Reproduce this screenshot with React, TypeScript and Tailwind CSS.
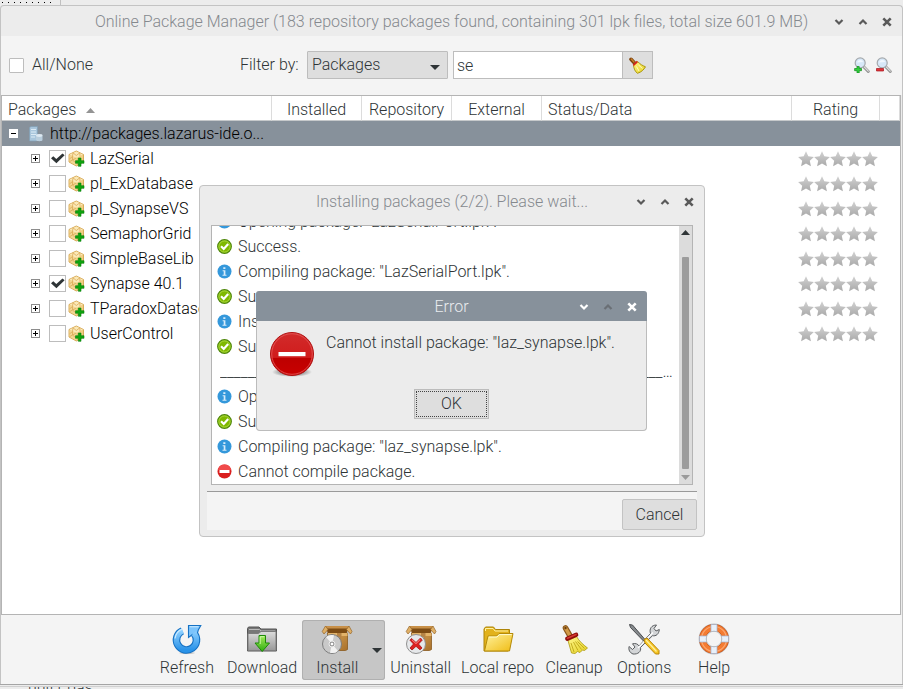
import { useState } from "react";
import type { ReactNode } from "react";

type LogKind = "info" | "ok" | "error";

interface PackageItem {
  name: string;
  checked: boolean;
}

const packages: PackageItem[] = [
  { name: "LazSerial", checked: true },
  { name: "pl_ExDatabase", checked: false },
  { name: "pl_SynapseVS", checked: false },
  { name: "SemaphorGrid", checked: false },
  { name: "SimpleBaseLib", checked: false },
  { name: "Synapse 40.1", checked: true },
  { name: "TParadoxDataset", checked: false },
  { name: "UserControl", checked: false },
];

const log: { kind?: LogKind; text: string }[] = [
  { kind: "info", text: 'Opening package: "LazSerialPort.lpk".' },
  { kind: "ok", text: "Success." },
  { kind: "info", text: 'Compiling package: "LazSerialPort.lpk".' },
  { kind: "ok", text: "Success." },
  { kind: "info", text: 'Installing package: "LazSerialPort.lpk".' },
  { kind: "ok", text: "Success." },
  { text: "_".repeat(90) },
  { kind: "info", text: 'Opening package: "laz_synapse.lpk".' },
  { kind: "ok", text: "Success." },
  { kind: "info", text: 'Compiling package: "laz_synapse.lpk".' },
  { kind: "error", text: "Cannot compile package." },
];

function Gradients() {
  return (
    <svg className="absolute size-0" aria-hidden="true">
      <defs>
        <linearGradient id="star" x1="0" y1="0" x2="0" y2="1">
          <stop offset="0" stopColor="#d2d2d2" />
          <stop offset="1" stopColor="#a9a9a9" />
        </linearGradient>
        <linearGradient id="gold" x1="0" y1="0" x2="1" y2="1">
          <stop offset="0" stopColor="#fff3a0" />
          <stop offset="1" stopColor="#f0bc14" />
        </linearGradient>
        <linearGradient id="straw" x1="0" y1="0" x2="1" y2="1">
          <stop offset="0" stopColor="#fff68a" />
          <stop offset="1" stopColor="#e4d022" />
        </linearGradient>
        <linearGradient id="blue" x1="0" y1="0" x2="0" y2="1">
          <stop offset="0" stopColor="#8fd0ff" />
          <stop offset="1" stopColor="#2a93e8" />
        </linearGradient>
        <linearGradient id="green" x1="0" y1="0" x2="0" y2="1">
          <stop offset="0" stopColor="#a4ea5a" />
          <stop offset="1" stopColor="#2fae10" />
        </linearGradient>
        <linearGradient id="grey" x1="0" y1="0" x2="0" y2="1">
          <stop offset="0" stopColor="#dcdcdc" />
          <stop offset="1" stopColor="#989898" />
        </linearGradient>
        <linearGradient id="carton" x1="0" y1="0" x2="1" y2="1">
          <stop offset="0" stopColor="#dba75a" />
          <stop offset="1" stopColor="#a8702a" />
        </linearGradient>
        <linearGradient id="red" x1="0" y1="0" x2="0" y2="1">
          <stop offset="0" stopColor="#d22b2b" />
          <stop offset="0.58" stopColor="#d01c1c" />
          <stop offset="0.6" stopColor="#bd0000" />
          <stop offset="1" stopColor="#c90000" />
        </linearGradient>
        <radialGradient id="shade">
          <stop offset="0.5" stopColor="#777" stopOpacity="0.8" />
          <stop offset="1" stopColor="#777" stopOpacity="0" />
        </radialGradient>
      </defs>
    </svg>
  );
}

function Chevron({ up, className }: { up?: boolean; className: string }) {
  return (
    <svg viewBox="0 0 10 10" className={`size-[10px] ${className}`} fill="none" stroke="currentColor" strokeWidth="2.2">
      <path d={up ? "M1.5 7 5 3.5 8.5 7" : "M1.5 3 5 6.5 8.5 3"} />
    </svg>
  );
}

function TitleBar({ title, active }: { title: string; active?: boolean }) {
  const tone = active ? "text-white" : "text-[#5a5a5a]";
  return (
    <header
      className={`grid h-[30px] shrink-0 grid-cols-[75px_1fr_75px] items-center pt-0.5 ${
        active ? "rounded-t-[3px] bg-[#87919b] text-[#e9ecef]" : "text-[#85898e]"
      }`}
    >
      <h2 className="col-start-2 text-center whitespace-nowrap">{title}</h2>
      <div className="flex">
        <button aria-label="Minimize" className="flex size-6 items-center justify-center">
          <Chevron className={tone} />
        </button>
        <button aria-label="Maximize" className="flex size-6 items-center justify-center">
          <Chevron up className={active ? "text-[#6a6f75]" : tone} />
        </button>
        <button aria-label="Close" className="flex size-6 items-center justify-center">
          <svg viewBox="0 0 10 10" className={`size-[10px] ${tone}`} stroke="currentColor" strokeWidth="2.6">
            <path d="M1.3 1.3 8.7 8.7M8.7 1.3 1.3 8.7" />
          </svg>
        </button>
      </div>
    </header>
  );
}

function CheckBox({ id, checked, small }: { id: string; checked?: boolean; small?: boolean }) {
  const [on, setOn] = useState(!!checked);
  return (
    <span className="grid shrink-0 place-items-center">
      <input
        id={id}
        type="checkbox"
        checked={on}
        onChange={() => setOn(!on)}
        className={`col-start-1 row-start-1 appearance-none border border-[#bdbdbd] bg-white ${
          small ? "size-[15px] rounded-[1px]" : "size-[17px]"
        }`}
      />
      {on && (
        <svg viewBox="0 0 17 17" className="pointer-events-none col-start-1 row-start-1 size-[17px]">
          <path d="M2 8.300 4.300 6.200 7.300 9 13.500 3.600 15.600 5.300 7.400 13.300Z" fill="#2e3436" />
        </svg>
      )}
    </span>
  );
}

function Expander({ open }: { open?: boolean }) {
  return (
    <button
      aria-label={open ? "Collapse" : "Expand"}
      className={`flex size-[9px] shrink-0 items-center justify-center border bg-white ${
        open ? "border-white" : "border-[#8c8c8c]"
      }`}
    >
      <svg viewBox="0 0 5 5" className="size-[5px]" fill="#000" shapeRendering="crispEdges">
        <path d={open ? "M0 2H5V3H0Z" : "M0 2H2V0H3V2H5V3H3V5H2V3H0Z"} />
      </svg>
    </button>
  );
}

function ServerIcon() {
  return (
    <svg viewBox="0 0 16 16" className="size-4 shrink-0">
      <path d="M1.500 1.500 3 .5H9.500V14L8 15H1.500Z" fill="#a9c6dc" stroke="#7f9db5" strokeWidth=".7" />
      <path d="M3 3.500H8M3 6H8M3 8.500H8M3 11H7" stroke="#dcebf5" strokeWidth="1.1" />
      <path d="M8 9.500V14C8 15.600 14.500 15.600 14.500 14V9.500" fill="#b9cedd" />
      <ellipse cx="11.250" cy="9.500" rx="3.250" ry="1.400" fill="#dde9f2" />
    </svg>
  );
}

function PackageIcon() {
  return (
    <svg viewBox="0 0 17 17" className="size-[17px] shrink-0">
      <path d="M1 4.500 8.300 1 15.500 4.500V12L8.300 16 1 12Z" fill="#f0cf82" stroke="#cf9a3d" strokeWidth=".8" />
      <path d="M1.500 4.600 8.300 1.500 15 4.600 8.300 8Z" fill="#fbe9b8" />
      <path d="M1.500 5V11.700L8.300 15.500V8Z" fill="#f3d795" />
      <path d="M4.500 6.500 5 2.800 8.300 5.500 11.800 2.800 12 6.200M1.400 9 4.500 6.500V10L1.500 11.700M8.300 8 4.500 10 8 13" fill="none" stroke="#dba955" strokeWidth=".8" />
      <path d="M10.300 8H13V10.700H16V13.300H13V16.300H10.300V13.300H7.500V10.700H10.300Z" fill="#0fa40f" stroke="#08800c" strokeWidth=".6" />
    </svg>
  );
}

function Stars() {
  return (
    <div className="flex justify-center pl-[3px]" role="img" aria-label="Not rated">
      {[0, 1, 2, 3, 4].map((n) => (
        <svg key={n} viewBox="0 0 16 16" className="size-4" fill="url(#star)">
          <path d="M8 .3 10.300 5.300 15.900 6 11.800 9.700 12.900 15.200 8 12.500 3.100 15.200 4.200 9.700.1 6 5.700 5.300Z" />
        </svg>
      ))}
    </div>
  );
}

function LogIcon({ kind }: { kind: LogKind }) {
  if (kind === "info") {
    return (
      <svg viewBox="0 0 15 15" className="size-[15px] shrink-0">
        <circle cx="7.500" cy="7.500" r="7" fill="#3498db" />
        <path d="M6.300 3.300H8.400V5H6.300ZM5.600 6.300H8.400V10.700H9.500V11.700H5.500V10.700H6.700V7.200H5.600Z" fill="#d8ecfa" />
      </svg>
    );
  }
  if (kind === "ok") {
    return (
      <svg viewBox="0 0 15 15" className="size-[15px] shrink-0">
        <circle cx="7.500" cy="7.500" r="6.800" fill="#7fb800" stroke="#4d8508" strokeWidth="1.200" />
        <circle cx="7.500" cy="7.500" r="5.600" fill="none" stroke="#b6e24e" strokeWidth=".8" />
        <path d="M4 7.300 6.700 9.900 11.200 5" fill="none" stroke="#fff" strokeWidth="2.200" />
      </svg>
    );
  }
  return (
    <svg viewBox="0 0 15 15" className="size-[15px] shrink-0">
      <circle cx="7.500" cy="7.500" r="7" fill="#d91f1f" />
      <path d="M1 6A6.600 6.600 0 0 1 14 6Z" fill="#f04a4a" />
      <path d="M2.500 6H12.500V9H2.500Z" fill="#fff" />
    </svg>
  );
}

function BigErrorIcon() {
  return (
    <svg viewBox="0 0 46 46" className="size-[46px] shrink-0">
      <ellipse cx="23" cy="41" rx="20" ry="5" fill="url(#shade)" />
      <circle cx="23" cy="23" r="21.500" fill="url(#red)" stroke="#b01010" />
      <circle cx="23" cy="23" r="20.300" fill="none" stroke="#e65a5a" strokeWidth=".8" />
      <path d="M9.500 21H36.500V25.200H9.500Z" fill="#fff" />
    </svg>
  );
}

function Magnifier({ plus }: { plus?: boolean }) {
  return (
    <svg viewBox="0 0 16 16" className="size-4">
      <path d="M9.500 9.500 14.300 14.500" stroke="#8d8d8d" strokeWidth="2.800" strokeLinecap="round" />
      <path d="M9.800 9.500 14.300 14.100" stroke="#dedede" strokeWidth="1.200" strokeLinecap="round" />
      <circle cx="6.200" cy="5.900" r="5" fill="#d7e8f8" stroke="#a5a9ad" strokeWidth="1.200" />
      <path d="M3 5.500A3.300 3.300 0 0 1 9.300 5Z" fill="#f2f8fe" />
      {plus ? (
        <path d="M3 9.500H5.200V11.500H7.500V13.700H5.200V16H3V13.700H.6V11.500H3Z" fill="#2fd03a" stroke="#118a1c" strokeWidth=".7" />
      ) : (
        <path d="M.5 11.500H7.500V14H.5Z" fill="#e0343a" stroke="#a8141c" strokeWidth=".7" />
      )}
    </svg>
  );
}

function SmallBroom() {
  return (
    <svg viewBox="0 0 17 17" className="size-[17px]">
      <path d="M2 2.300 5.500 6" stroke="#7c420e" strokeWidth="3.600" strokeLinecap="round" />
      <path d="M2.300 2 5 5" stroke="#c9802c" strokeWidth="1.300" strokeLinecap="round" />
      <path d="M4.500 8.500 8.700 4.500C11 7.300 13.500 8.500 16.500 9.800 14.500 13 12.500 15 8.500 16.300 5.800 14.500 5 11.500 4.500 8.500Z" fill="url(#straw)" stroke="#a58f00" strokeWidth=".9" />
      <path d="M4.300 8.300 8.300 4.500" stroke="#d8261a" strokeWidth="1.800" />
      <path d="M7.500 9.500 10 14M9.500 8 13.500 11.500" stroke="#fffbc0" />
    </svg>
  );
}

function RefreshIcon() {
  return (
    <svg viewBox="0 0 32 32" className="size-8">
      <ellipse cx="16" cy="30" rx="9" ry="1.600" fill="url(#shade)" opacity=".5" />
      <path d="M11.300 7.900A10 10 0 1 0 23.200 10.600" fill="none" stroke="#1672c4" strokeWidth="7.600" />
      <path d="M17.500 2.500H29.800L27.300 7 25.500 13.500 21.500 11.500 17.500 14.500Z" fill="#7cc4fc" stroke="#1672c4" strokeWidth="1.100" />
      <path d="M11.800 7.700A10 10 0 1 0 22.800 10.200" fill="none" stroke="url(#blue)" strokeWidth="5.400" />
      <path d="M11.500 6A11.800 11.800 0 0 0 4 15.500M18.700 3.700H27.500" fill="none" stroke="#cdebff" strokeWidth="1.100" />
    </svg>
  );
}

function DownloadIcon() {
  return (
    <svg viewBox="0 0 32 32" className="size-8">
      <path d="M1.500 28V5.500L2.500 4H13L15 6H30.500V28Z" fill="#777" stroke="#555" />
      <path d="M3 6.500H13.500L15 8H29" stroke="#bbb" fill="none" />
      <path d="M2 10.500H12.500L15 8.500H30V27.500H2Z" fill="url(#grey)" stroke="#7c7c7c" />
      <path d="M13 12.500H19.500V20H23.500L16.200 28.500 9 20H13Z" fill="url(#green)" stroke="#1c8a08" />
      <path d="M14.200 13.700H18.300M14.200 14V21" stroke="#d4ffb0" strokeWidth=".9" />
    </svg>
  );
}

function Carton({ children }: { children: ReactNode }) {
  return (
    <svg viewBox="0 0 32 32" className="size-8">
      <path d="M6.500 10H26.500V26.500L24.500 27.500H8Z" fill="url(#carton)" stroke="#8a5a1e" strokeWidth=".8" />
      <path d="M4.500 3.500H28L25.500 10.500H7Z" fill="#7d4c14" />
      <path d="M4.500 3H28L27 5.500H5.500Z" fill="#c89048" />
      <path d="M4.500 3 1.200 8.500 3 11 7 6.500ZM28 3 31 8.500 29.500 11 25.500 6.500Z" fill="#e0b066" stroke="#94642a" strokeWidth=".7" />
      <path d="M7 10H26.500V13H7Z" fill="#e2b36a" />
      <path d="M16 10H20.500V17H16Z" fill="#b68446" />
      {children}
    </svg>
  );
}

function InstallIcon() {
  return (
    <Carton>
      <circle cx="11" cy="21" r="9.500" fill="#c9c9c9" stroke="#7d7d7d" />
      <path d="M11 21 5 14A9 9 0 0 1 13 12.200ZM11 21 17 27.900A9 9 0 0 1 9 29.800Z" fill="#f2f2f2" />
      <circle cx="11" cy="21" r="3" fill="#999" stroke="#eee" />
      <circle cx="11" cy="21" r="1.300" fill="#fff" />
    </Carton>
  );
}

function UninstallIcon() {
  return (
    <Carton>
      <circle cx="11" cy="21" r="9.500" fill="#e6e8ea" stroke="#8f8f8f" />
      <path d="M6.500 15.500 11 19.500 15.500 15 17.200 17.200 13.500 21 17 25 15 26.800 11 23.300 7 27 5 25 8.500 21 5 17.200Z" fill="#dd2222" stroke="#a80f0f" strokeWidth=".8" />
      <path d="M7 16.800 11 20.600 15.300 16.400" fill="none" stroke="#ff8d8d" />
    </Carton>
  );
}

function FolderIcon() {
  return (
    <svg viewBox="0 0 32 32" className="size-8">
      <path d="M2 28V6L3.500 4H11.500L13.500 6.500H27.500V12L26 28Z" fill="#e2b21c" stroke="#ad8408" />
      <path d="M3.500 8V5.500H11L13 8H26" stroke="#fff0a0" fill="none" />
      <path d="M2.500 28 6 13H14.500L17 10.500H31L27.500 28Z" fill="url(#gold)" stroke="#b58a08" />
      <path d="M6.800 14H15L17.400 11.600H29.800" stroke="#fffbd0" fill="none" />
    </svg>
  );
}

function BroomIcon() {
  return (
    <svg viewBox="0 0 32 32" className="size-8">
      <path d="M7.500 5 11.500 12" stroke="#8e5a1c" strokeWidth="5.600" strokeLinecap="round" />
      <path d="M7.500 5 11.500 12" stroke="#d29a48" strokeWidth="3.400" strokeLinecap="round" />
      <circle cx="7.500" cy="5" r="1.200" fill="#6b3e0c" />
      <path d="M10 17.500 18.500 13.500C21 18 25 21.500 29.500 25L26.500 27.500 24.500 27 22 29.500 19.500 28.500 17 30.500 13.500 30Z" fill="url(#straw)" stroke="#ab980c" strokeWidth=".8" />
      <path d="M13 20 16 29M15.500 19 20 27.500M17.500 18.500 23.500 26.500M19.500 18.500 26.500 25.500" stroke="#b8a012" strokeWidth=".8" />
      <path d="M9.200 15.700 18.200 11.800" stroke="#8f0c0c" strokeWidth="4.200" strokeLinecap="round" />
      <path d="M9.400 15.200 18 11.400" stroke="#d33a30" strokeWidth="1.600" strokeLinecap="round" />
    </svg>
  );
}

function ToolsIcon() {
  return (
    <svg viewBox="0 0 32 32" className="size-8">
      <path
        d="M5 31C1.500 29.500.5 27 1 23.500L4.500 26.500 7 24 4.500 20.800C7.500 20 10 21 11 23L22.500 10.500C21 6 23.500 2 28.500 2L26 5.500 28 8 31.300 6.500C31 11 28 13.500 24.500 12.700L12.500 24.500C13.500 28.500 10 31.500 5 31Z"
        fill="#d3d5d7"
        stroke="#5b5e61"
      />
      <path d="M10 25 25 9.500" stroke="#fff" strokeWidth="1.200" />
      <path d="M1.500 1.500 4.500 2 17 16.500 15.500 18 2.500 4.500Z" fill="#85898c" stroke="#3f4245" strokeWidth=".9" />
      <path d="M16 16.500 19 15 31 27.500V31H27.500L17 20Z" fill="#f6c624" stroke="#b98406" />
      <path d="M18 17 28.500 28.500" stroke="#fff0a0" strokeWidth="1.300" />
    </svg>
  );
}

function LifebuoyIcon() {
  return (
    <svg viewBox="0 0 32 32" className="size-8">
      <circle cx="16" cy="16" r="14.700" fill="none" stroke="#bfc3c8" strokeWidth="1.400" />
      <circle cx="16" cy="16" r="11.500" fill="none" stroke="#c9591c" strokeWidth="7" />
      <circle cx="16" cy="16" r="11.500" fill="none" stroke="#f47c33" strokeWidth="5.600" />
      <circle cx="16" cy="16" r="12.500" fill="none" stroke="#fba872" strokeWidth="1.200" />
      <path d="M13 1.500H19V8.500H13ZM13 23.500H19V30.500H13ZM1.500 13V19H8.500V13ZM23.500 13V19H30.500V13Z" fill="#e8f0fa" stroke="#9fb6d4" strokeWidth=".7" />
      <circle cx="16" cy="16" r="7.800" fill="none" stroke="#b9bdc3" />
    </svg>
  );
}

function ToolButton({ label, icon }: { label: string; icon: ReactNode }) {
  return (
    <button className="flex h-[60px] min-w-[70px] flex-col items-center gap-px px-[5px] pt-[3px] leading-6 whitespace-nowrap">
      {icon}
      {label}
    </button>
  );
}

function PackageTable() {
  const head = "h-[25px] border-r border-b border-r-[#dcdcdc] border-b-[#c6c9cb] pt-1 font-light";
  return (
    <div className="mr-px flex-1 overflow-hidden border border-[#b4b4b4] bg-white">
      <table className="w-full table-fixed border-separate border-spacing-0">
        <colgroup>
          <col className="w-[270px]" />
          <col className="w-[90px]" />
          <col className="w-[90px]" />
          <col className="w-[90px]" />
          <col />
          <col className="w-[88px]" />
          <col className="w-[20px]" />
        </colgroup>
        <thead className="leading-5">
          <tr>
            <th className={`${head} pl-1.5 text-left`}>
              <span className="flex items-center gap-2.5">
                Packages
                <svg viewBox="0 0 9 5" className="h-[5px] w-[9px]" fill="#949494">
                  <path d="M0 5 4.500 0 9 5Z" />
                </svg>
              </span>
            </th>
            <th className={head}>Installed</th>
            <th className={head}>Repository</th>
            <th className={head}>External</th>
            <th className={`${head} pl-1.5 text-left`}>Status/Data</th>
            <th className={head}>Rating</th>
            <th className={head}></th>
          </tr>
        </thead>
        <tbody className="leading-6 text-black">
          <tr className="h-[25px] bg-[#87919b]">
            <td colSpan={7}>
              <div className="flex items-center pl-[7px]">
                <Expander open />
                <span className="ml-2.5 flex items-center gap-1.5">
                  <ServerIcon />
                  http://packages.lazarus-ide.o...
                </span>
              </div>
            </td>
          </tr>
          {packages.map((item) => (
            <tr key={item.name} className="h-[25px]">
              <td className="overflow-hidden">
                <div className="flex items-center pl-[29px]">
                  <Expander />
                  <label htmlFor={item.name} className="ml-[9px] flex items-center whitespace-nowrap">
                    <CheckBox id={item.name} checked={item.checked} />
                    <span className="mr-[5px] ml-0.5">
                      <PackageIcon />
                    </span>
                    {item.name}
                  </label>
                </div>
              </td>
              <td colSpan={4}></td>
              <td>
                <Stars />
              </td>
              <td></td>
            </tr>
          ))}
        </tbody>
      </table>
    </div>
  );
}

function InstallDialog() {
  return (
    <section className="absolute top-[185px] left-[199px] w-[506px] rounded-[4px] border border-[#c3c3c3] bg-[#ececec]">
      <TitleBar title="Installing packages (2/2). Please wait..." />
      <div className="px-[7px] pb-1.5">
        <div className="mx-1 mt-[9px] flex h-[260px] border border-[#b4b4b4] bg-white">
          <ul className="flex min-w-0 flex-1 flex-col justify-end overflow-hidden pl-[5px]">
            {log.map((line, i) => (
              <li key={i} className="flex h-[25px] shrink-0 items-center gap-1.5 leading-6">
                {line.kind && <LogIcon kind={line.kind} />}
                <span className={line.kind ? "whitespace-nowrap" : "mr-[5px] ml-[3px] truncate"}>{line.text}</span>
              </li>
            ))}
          </ul>
          <div className="flex w-[13px] flex-col items-center bg-[#dcdcdc]">
            <svg viewBox="0 0 9 5" className="my-1 h-[5px] w-[9px]" fill="#2e3436">
              <path d="M0 5 4.500 0 9 5Z" />
            </svg>
            <div className="mt-[18px] mb-1.5 w-[7px] flex-1 rounded-[1px] bg-[#9c9c9c]"></div>
            <svg viewBox="0 0 9 5" className="mb-1 h-[5px] w-[9px]" fill="#9a9a9a">
              <path d="M0 0 4.500 5 9 0Z" />
            </svg>
          </div>
        </div>
        <div className="mt-1.5 flex justify-end border-t border-[#9a9a9a] bg-[#f4f4f4] pt-[7px]">
          <button className="h-[31px] w-[75px] rounded-[2px] border border-[#c3c3c3] bg-[#dedede]">Cancel</button>
        </div>
      </div>
    </section>
  );
}

function ErrorDialog() {
  return (
    <section
      role="alertdialog"
      aria-label="Error"
      className="absolute top-[291px] left-[256px] w-[391px] rounded-[4px] bg-[#ececec]"
    >
      <TitleBar title="Error" active />
      <div className="rounded-b-[4px] border border-t-0 border-[#bcbcbc] pb-[11px]">
        <div className="flex gap-[11px] px-3 pt-[10px]">
          <BigErrorIcon />
          <p className="leading-6">Cannot install package: "laz_synapse.lpk".</p>
        </div>
        <div className="mt-3 flex justify-center">
          <button className="h-[30px] w-[75px] border border-[#bcbcbc] bg-[#dedede] p-px">
            <span className="flex h-full items-center justify-center border border-dotted border-[#444]">OK</span>
          </button>
        </div>
      </div>
    </section>
  );
}

export default function App() {
  const [query, setQuery] = useState("se");

  return (
    <div className="relative flex h-screen flex-col overflow-hidden bg-[#ececec] font-['Roboto',sans-serif] text-[16px] font-light text-[#2e3436]">
      <Gradients />
      <div className="flex h-[5px] shrink-0 items-center">
        <div className="flex h-full w-[61px] items-center gap-[5px] border-r border-[#c0c0c0] pl-0.5">
          {Array.from({ length: 9 }, (_, i) => (
            <span key={i} className="size-px bg-black"></span>
          ))}
        </div>
      </div>

      <main className="flex min-h-0 flex-1 flex-col rounded-t-[4px] border border-b-0 border-[#c3c3c3]">
        <TitleBar title="Online Package Manager (183 repository packages found, containing 301 lpk files, total size 601.9 MB)" />

        <div className="flex h-[59px] shrink-0 items-center bg-[#f4f4f4] pr-2.5 pb-px pl-2">
          <div className="w-[231px]">
            <label htmlFor="all" className="flex w-fit items-center gap-2">
              <CheckBox id="all" small />
              All/None
            </label>
          </div>
          <label htmlFor="filter" className="w-[67px]">
            Filter by:
          </label>
          <div className="grid w-[141px] items-center">
            <select
              id="filter"
              className="col-start-1 row-start-1 h-7 appearance-none rounded-[1px] border border-[#bdbdbd] bg-[#dedede] pl-1"
            >
              <option>Packages</option>
            </select>
            <svg viewBox="0 0 10 5" className="pointer-events-none col-start-1 row-start-1 mt-1 mr-2 h-[5px] w-[10px] justify-self-end" fill="#2e3436">
              <path d="M0 0H10L5 5Z" />
            </svg>
          </div>
          <input
            aria-label="Filter text"
            value={query}
            onChange={(e) => setQuery(e.target.value)}
            className="ml-[5px] h-7 w-[170px] border border-[#bdbdbd] bg-white px-[3px] outline-none"
          />
          <button
            aria-label="Clear filter"
            className="flex h-7 w-[30px] items-center justify-center border border-l-0 border-[#bdbdbd] bg-[#dedede]"
          >
            <SmallBroom />
          </button>
          <div className="ml-auto flex gap-1.5">
            <button aria-label="Expand all">
              <Magnifier plus />
            </button>
            <button aria-label="Collapse all">
              <Magnifier />
            </button>
          </div>
        </div>

        <PackageTable />

        <nav className="flex h-[69px] shrink-0 justify-center bg-[#f4f4f4] pt-[5px] pr-0.5">
          <ToolButton label="Refresh" icon={<RefreshIcon />} />
          <ToolButton label="Download" icon={<DownloadIcon />} />
          <div className="flex h-[60px] rounded-[3px] bg-[#c6c6c6] ring-1 ring-[#b0b0b0] ring-inset">
            <ToolButton label="Install" icon={<InstallIcon />} />
            <button aria-label="More install options" className="flex w-[13px] items-center">
              <svg viewBox="0 0 10 5" className="h-[5px] w-[10px]" fill="#2e3436">
                <path d="M0 0H10L5 5Z" />
              </svg>
            </button>
          </div>
          <ToolButton label="Uninstall" icon={<UninstallIcon />} />
          <ToolButton label="Local repo" icon={<FolderIcon />} />
          <ToolButton label="Cleanup" icon={<BroomIcon />} />
          <ToolButton label="Options" icon={<ToolsIcon />} />
          <ToolButton label="Help" icon={<LifebuoyIcon />} />
        </nav>
      </main>

      {/* edge of the editor window underneath */}
      <footer className="shrink-0 border-t border-[#a5a5a5] pt-px">
        <div className="h-[3px] overflow-hidden border-t border-[#cfcfcf] pl-7 leading-[2px]">unit1.pas</div>
      </footer>

      <InstallDialog />
      <ErrorDialog />
    </div>
  );
}
